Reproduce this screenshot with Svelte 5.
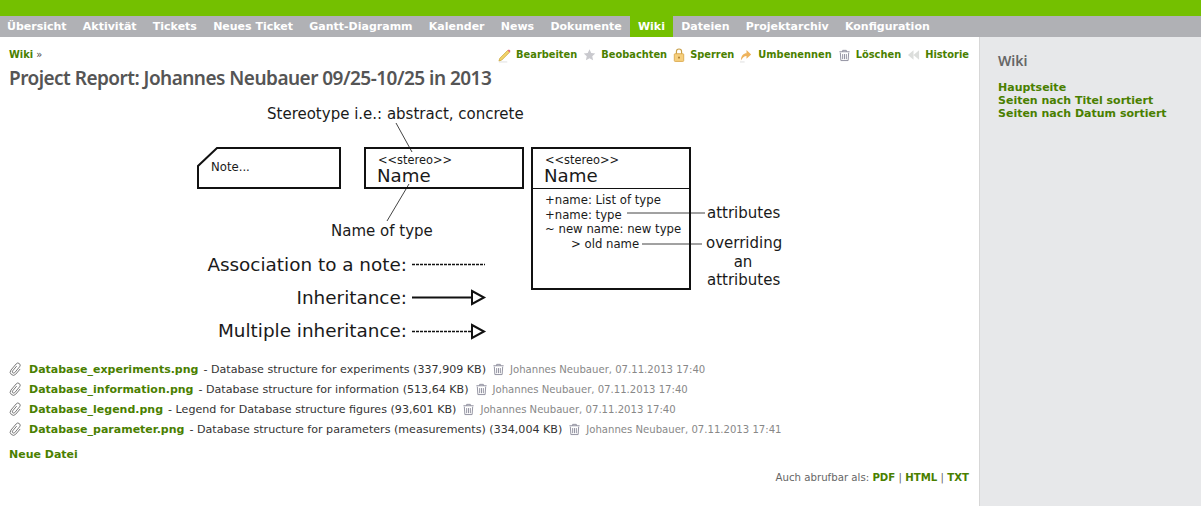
<script>
	const tabs = ['Übersicht', 'Aktivität', 'Tickets', 'Neues Ticket', 'Gantt-Diagramm', 'Kalender', 'News', 'Dokumente', 'Wiki', 'Dateien', 'Projektarchiv', 'Konfiguration'];
	const attachments = [
		{ name: 'Database_experiments.png', desc: 'Database structure for experiments (337,909 KB)', time: '07.11.2013 17:40' },
		{ name: 'Database_information.png', desc: 'Database structure for information (513,64 KB)', time: '07.11.2013 17:40' },
		{ name: 'Database_legend.png', desc: 'Legend for Database structure figures (93,601 KB)', time: '07.11.2013 17:40' },
		{ name: 'Database_parameter.png', desc: 'Database structure for parameters (measurements) (334,004 KB)', time: '07.11.2013 17:41' }
	];
</script>

{#snippet trash()}
	<svg class="icon" width="13" height="14" viewBox="0 0 14 14" fill="none" stroke="#8d8d9c" stroke-width="1">
		<path d="M1.500 3.500h11M5 3.500V2h4v1.500M2.500 4.500l.6 8.500h7.800l.6-8.500M5 6v5.500M7 6v5.500M9 6v5.500" />
	</svg>
{/snippet}

<div class="top"></div>
<nav class="menu">
	{#each tabs as tab}
		<a href="#top" class:selected={tab === 'Wiki'}>{tab}</a>
	{/each}
</nav>

<div class="main">
	<div class="content">
		<div class="header">
			<p class="crumb"><a href="#top">Wiki</a> »</p>
			<div class="actions">
				<a href="#top">
					<svg class="icon" width="13" height="16" viewBox="0 0 14 16">
						<path d="M2 11.500L10.500 3l2 2L4 13.500l-3 1z" fill="#f2d36b" stroke="#c9a53a" stroke-width=".8" />
						<path d="M10.500 3l2 2 1-1.200-1.700-1.800z" fill="#e8607a" />
						<path d="M1 15.500h9" stroke="#ddd" />
					</svg>Bearbeiten</a>
				<a href="#top">
					<svg class="icon" width="13" height="16" viewBox="0 0 16 16">
						<path d="M8 1l2.100 4.600 5 .6-3.700 3.400 1 5L8 12.100 3.600 14.600l1-5L.9 6.200l5-.6z" fill="#c9c9ce" />
					</svg>Beobachten</a>
				<a href="#top">
					<svg class="icon" width="12" height="16" viewBox="0 0 14 16" fill="none">
						<path d="M4 7V4a3 3 0 0 1 6 0v3" stroke="#c9a04a" stroke-width="1.400" />
						<rect x="1.500" y="6.500" width="11" height="9" rx="1" fill="#f6cf7e" stroke="#d9a648" />
						<rect x="6" y="10" width="2" height="2" fill="#a97a28" />
					</svg>Sperren</a>
				<a href="#top">
					<svg class="icon" width="13" height="16" viewBox="0 0 14 16">
						<path d="M1 14C1 8 4 6 7 6V2.500l5 5-5 4.500V9C4.500 9 2.500 11 1 14z" fill="#eeb35c" />
						<path d="M0 15.500h5" stroke="#ddd" />
					</svg>Umbenennen</a>
				<a href="#top">{@render trash()}Löschen</a>
				<a href="#top">
					<svg class="icon" width="13" height="14" viewBox="0 0 14 14" fill="#dcdedc">
						<path d="M7 2v10L1 7zM13 2v10L7 7z" />
					</svg>Historie</a>
			</div>
		</div>
		<h2>Project Report: Johannes Neubauer 09/25-10/25 in 2013</h2>

		<svg class="diagram" width="600" height="250" viewBox="190 100 600 250" fill="none" stroke="#111">
			<g stroke="#444" stroke-width="1">
				<path d="M396 123l16 29M409 184l-22 37M627 213h78M642 244h60" />
			</g>
			<g stroke-width="2">
				<path d="M217 148H340V188H198V166z" />
				<rect x="365" y="148" width="158" height="40" />
				<rect x="532" y="148" width="158" height="141" />
			</g>
			<path d="M532 188.500H690" stroke-width="1" />
			<path d="M412 264.500H485" stroke-width="1.500" stroke-dasharray="3 1" />
			<path d="M412 297.500H472" stroke-width="2" />
			<path d="M472 291l12 6.500-12 6.500z" stroke-width="2" />
			<path d="M412 331.500H472" stroke-width="1.500" stroke-dasharray="3 1" />
			<path d="M472 325l12 6.500-12 6.500z" stroke-width="2" />
			<g class="dia" fill="#1a1a1a" stroke="none">
				<text x="267" y="119" font-size="15">Stereotype i.e.: abstract, concrete</text>
				<text x="211" y="171" font-size="11.700">Note...</text>
				<text x="378" y="164" font-size="11.400">&lt;&lt;stereo&gt;&gt;</text>
				<text x="377" y="182" font-size="18.200">Name</text>
				<text x="545" y="164" font-size="11.400">&lt;&lt;stereo&gt;&gt;</text>
				<text x="544" y="182" font-size="18.200">Name</text>
				<text x="331" y="236" font-size="15">Name of type</text>
				<text x="545" y="204" font-size="11.700">+name: List of type</text>
				<text x="545" y="219" font-size="11.700">+name: type</text>
				<text x="545" y="233" font-size="11.700">~ new name: new type</text>
				<text x="571" y="248" font-size="11.700">&gt; old name</text>
				<text x="707" y="218" font-size="15">attributes</text>
				<text x="706" y="248" font-size="15">overriding</text>
				<text x="743" y="267" font-size="15" text-anchor="middle">an</text>
				<text x="707" y="285" font-size="15">attributes</text>
				<text x="407" y="271" font-size="18.400" text-anchor="end">Association to a note:</text>
				<text x="407" y="304" font-size="18.400" text-anchor="end">Inheritance:</text>
				<text x="407" y="337" font-size="18.400" text-anchor="end">Multiple inheritance:</text>
			</g>
		</svg>

		<ul class="attachments">
			{#each attachments as file}
				<li>
					<svg class="clip" width="14" height="14" viewBox="0 0 14 14" fill="none" stroke="#777" stroke-width="1">
						<path transform="rotate(40 7 7) translate(.7 .7) scale(.9)" d="M5.500 4v7a1.500 1.500 0 0 0 3 0V2.500a2.500 2.500 0 0 0-5 0v9a3.500 3.500 0 0 0 7 0V4" />
					</svg>
					<a href="#top">{file.name}</a>
					<span class="desc">- {file.desc}</span>
					{@render trash()}
					<span class="author">Johannes Neubauer, {file.time}</span>
				</li>
			{/each}
		</ul>

		<p class="new-file"><a href="#top">Neue Datei</a></p>
		<p class="formats">Auch abrufbar als: <a href="#top">PDF</a> | <a href="#top">HTML</a> | <a href="#top">TXT</a></p>
	</div>

	<aside class="sidebar">
		<h3>Wiki</h3>
		<a href="#top">Hauptseite</a>
		<a href="#top">Seiten nach Titel sortiert</a>
		<a href="#top">Seiten nach Datum sortiert</a>
	</aside>
</div>

<style>
	:global(body) {
		margin: 0;
		background: #fff;
		font-family: 'DejaVu Sans', Verdana, sans-serif;
		font-size: 11px;
		color: #484848;
	}

	a {
		color: #4a7f00;
		font-weight: bold;
		text-decoration: none;
	}

	p {
		margin: 0;
	}

	.top {
		height: 16px;
		background: #74c000;
	}

	.menu {
		display: flex;
		height: 21px;
		background: #b0b1b5;
	}

	.menu a {
		padding: 0 8.120px;
		line-height: 21px;
		color: #fff;
	}

	.menu a:first-child {
		padding-left: 7px;
	}

	.menu a.selected {
		background: #74c000;
	}

	.main {
		display: flex;
		height: 469px;
	}

	.content {
		flex: 1;
		min-width: 0;
		padding: 10px 10px 0 9px;
	}

	.header {
		display: flex;
		justify-content: space-between;
		align-items: center;
		height: 15px;
		font-size: 9.850px;
	}

	.actions {
		display: flex;
		align-items: center;
		gap: 6px;
	}

	.actions a {
		display: flex;
		align-items: center;
		gap: 5px;
	}

	.icon {
		flex: none;
	}

	h2 {
		margin: 4px 0 0;
		font-family: 'Noto Sans', sans-serif;
		font-size: 19px;
		line-height: 24px;
		font-weight: 600;
		letter-spacing: -0.530px;
		color: #555;
	}

	.diagram {
		display: block;
		margin: 10px 0 0 181px;
	}

	.dia text {
		font-family: 'DejaVu Sans', sans-serif;
	}

	.attachments {
		list-style: none;
		margin: 9px 0 0;
		padding: 0;
	}

	.attachments li {
		display: flex;
		align-items: center;
		height: 20px;
		white-space: pre;
		color: #333;
	}

	.clip {
		margin: 0 6px 0 0;
	}

	.desc {
		margin: 0 6px 0 5px;
		font-size: 11.100px;
	}

	.author {
		margin-left: 5px;
		font-size: 10.100px;
		color: #888;
	}

	.new-file {
		margin-top: 9px;
	}

	.formats {
		margin-top: 11px;
		text-align: right;
		font-size: 10.200px;
		color: #666;
	}

	.sidebar {
		box-sizing: border-box;
		display: flex;
		flex-direction: column;
		width: 222px;
		padding: 15px 10px 0 18px;
		background: #e7e8ea;
		border-left: 1px solid #d7d7d7;
		line-height: 13px;
	}

	.sidebar h3 {
		margin: 0 0 11px;
		font-family: 'Noto Sans', sans-serif;
		font-size: 14px;
		line-height: 18px;
		font-weight: 600;
		color: #666;
	}
</style>
